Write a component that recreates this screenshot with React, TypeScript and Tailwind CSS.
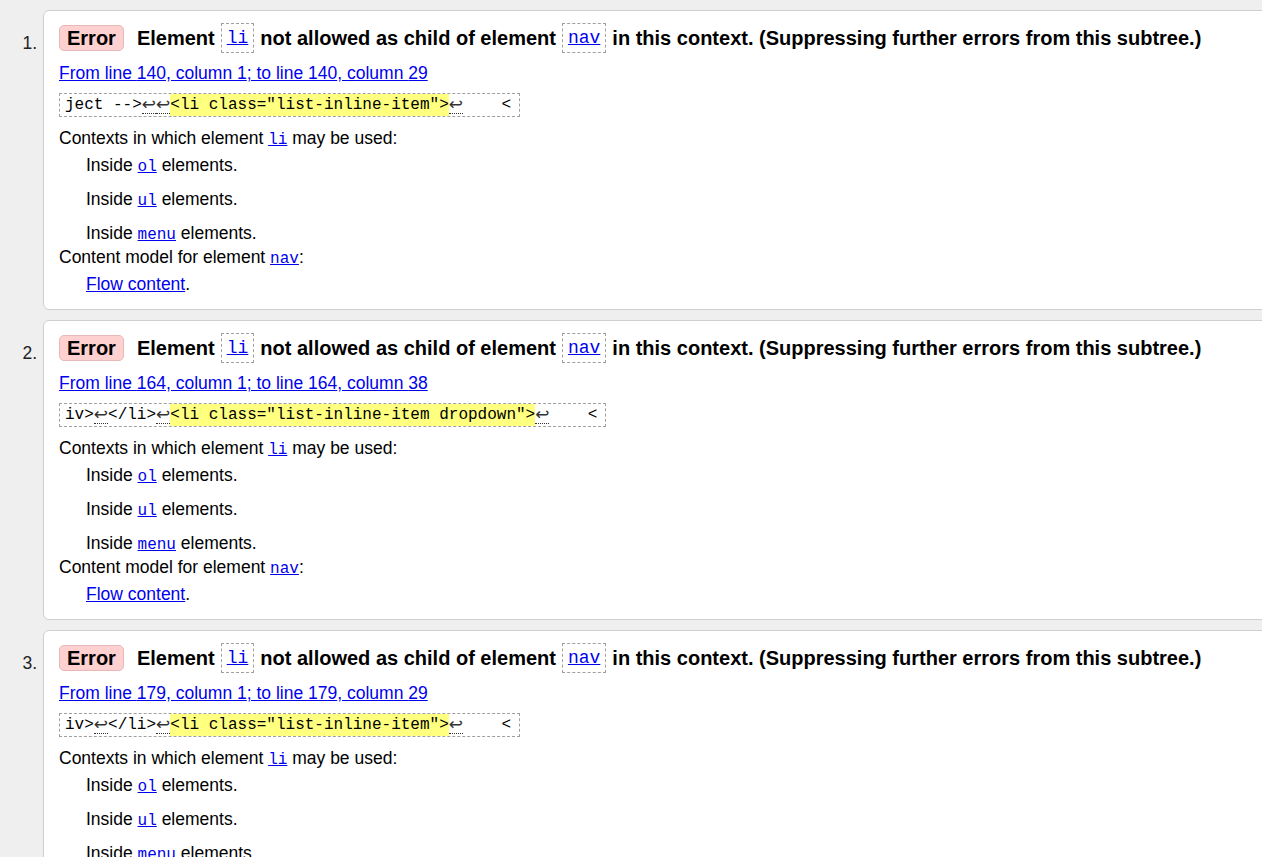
import React from 'react'

type Msg = {
  line: number
  from: number
  to: number
  before: string[]
  mark: string
}

const messages: Msg[] = [
  { line: 140, from: 1, to: 29, before: ['ject -->', '↩', '↩'], mark: '<li class="list-inline-item">' },
  { line: 164, from: 1, to: 38, before: ['iv>', '↩', '</li>', '↩'], mark: '<li class="list-inline-item dropdown">' },
  { line: 179, from: 1, to: 29, before: ['iv>', '↩', '</li>', '↩'], mark: '<li class="list-inline-item">' },
]

const mono = "font-['Liberation_Mono','DejaVu_Sans_Mono',monospace]"

const CodeTag = ({ name }: { name: string }) => (
  <span className="inline-flex items-center h-[30px] px-[5px] border border-dashed border-[#a0a0a0] mx-[6px]">
    <a href="#" className={`${mono} text-[18px] font-normal text-[#0000ee] underline`}>{name}</a>
  </span>
)

const InlineCode = ({ name }: { name: string }) => (
  <a href="#" className={`${mono} text-[16px] leading-none text-[#0000ee] underline`}>{name}</a>
)

const Lf = () => (
  <span className="text-[#333] leading-none border-b border-dotted border-[#333] font-['DejaVu_Sans',sans-serif] text-[17px]">↩</span>
)

const Card = ({ msg, n }: { msg: Msg; n: number }) => (
  <li className="flex">
    <div className="w-[43px] shrink-0 pt-[10px] h-[56px] flex items-center justify-end pr-[6px] text-[17.5px] text-[#222]">{n}.</div>
    <div className="flex-1 min-w-[1240px] bg-white border border-[#cfcfcf] rounded-[6px] pl-[15px] pt-[9px] pb-[14px] text-[17.5px] text-black leading-[22px]">
      <div className="flex items-center h-[36px] whitespace-nowrap">
        <span className="inline-flex items-center h-[26px] px-[7px] rounded-[5px] bg-[#ffd0d0] border border-[#e8b8b8] font-bold text-[20px]">Error</span>
        <span className="ml-[13px] font-bold text-[20px] flex items-center">
          Element<CodeTag name="li" />not allowed as child of element<CodeTag name="nav" />in this context. (Suppressing further errors from this subtree.)
        </span>
      </div>
      <div className="mt-[5px] leading-[24px]">
        <a href="#" className="text-[#0000ee] underline">From line {msg.line}, column {msg.from}; to line {msg.line}, column {msg.to}</a>
      </div>
      <div className={`mt-[8px] inline-flex items-center h-[24px] pl-[5px] pr-[8px] border border-dashed border-[#a0a0a0] ${mono} text-[16px] whitespace-pre`}>
        {msg.before.map((p, i) => (p === '↩' ? <Lf key={i} /> : <span key={i}>{p}</span>))}
        <span className="bg-[#ffff80]">{msg.mark}</span>
        <Lf />
        <span>{'    <'}</span>
      </div>
      <div className="mt-[10px]">Contexts in which element <InlineCode name="li" /> may be used:</div>
      <div className="pl-[27px]">
        <div className="mt-[5px]">Inside <InlineCode name="ol" /> elements.</div>
        <div className="mt-[12px]">Inside <InlineCode name="ul" /> elements.</div>
        <div className="mt-[12px]">Inside <InlineCode name="menu" /> elements.</div>
      </div>
      <div className="mt-[2px]">Content model for element <InlineCode name="nav" />:</div>
      <div className="mt-[5px] pl-[27px]">
        <a href="#" className="text-[#0000ee] underline">Flow content</a>.
      </div>
    </div>
  </li>
)

export default function App() {
  return (
    <div className="min-h-screen w-full overflow-hidden bg-[#efefef] font-['Liberation_Sans',Arial,sans-serif] pt-[10px]">
      <ol className="flex flex-col gap-[10px]">
        {messages.map((m, i) => (
          <Card key={i} msg={m} n={i + 1} />
        ))}
      </ol>
    </div>
  )
}
